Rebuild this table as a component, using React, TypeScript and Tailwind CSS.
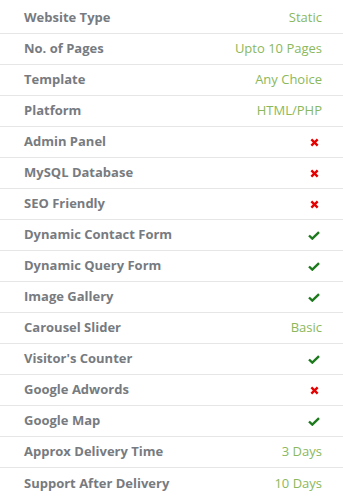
import React from 'react';

type Value = string | 'yes' | 'no';

const rows: { label: string; value: Value }[] = [
  { label: 'Website Type', value: 'Static' },
  { label: 'No. of Pages', value: 'Upto 10 Pages' },
  { label: 'Template', value: 'Any Choice' },
  { label: 'Platform', value: 'HTML/PHP' },
  { label: 'Admin Panel', value: 'no' },
  { label: 'MySQL Database', value: 'no' },
  { label: 'SEO Friendly', value: 'no' },
  { label: 'Dynamic Contact Form', value: 'yes' },
  { label: 'Dynamic Query Form', value: 'yes' },
  { label: 'Image Gallery', value: 'yes' },
  { label: 'Carousel Slider', value: 'Basic' },
  { label: "Visitor's Counter", value: 'yes' },
  { label: 'Google Adwords', value: 'no' },
  { label: 'Google Map', value: 'yes' },
  { label: 'Approx Delivery Time', value: '3 Days' },
  { label: 'Support After Delivery', value: '10 Days' },
];

const Cross = () => (
  <svg width="9" height="9" viewBox="0 0 10 10" className="mr-[3px]">
    <path d="M1.5 1.5 L8.5 8.5 M8.5 1.5 L1.5 8.5" stroke="#e60000" strokeWidth="2.6" strokeLinecap="butt" />
  </svg>
);

const Check = () => (
  <svg width="12" height="9" viewBox="0 0 12 9" className="mr-[2px]">
    <path d="M1 4.5 L4.3 7.6 L11 1.2" fill="none" stroke="#1c7a1c" strokeWidth="2.4" />
  </svg>
);

const renderValue = (value: Value) => {
  if (value === 'yes') return <Check />;
  if (value === 'no') return <Cross />;
  return <span className="text-[#8ab85c]">{value}</span>;
};

export default function App() {
  return (
    <div className="w-[343px] h-[498px] overflow-hidden bg-white pt-[3px] font-['Open_Sans',sans-serif] text-[13px]">
      {rows.map((row, i) => (
        <div
          key={row.label}
          className={`flex h-[31px] items-center justify-between pl-6 pr-[21px] ${
            i < rows.length - 1 ? 'border-b border-[#e6e6e6]' : ''
          }`}
        >
          <span className="font-bold text-[#777b7f]">{row.label}</span>
          {renderValue(row.value)}
        </div>
      ))}
    </div>
  );
}
